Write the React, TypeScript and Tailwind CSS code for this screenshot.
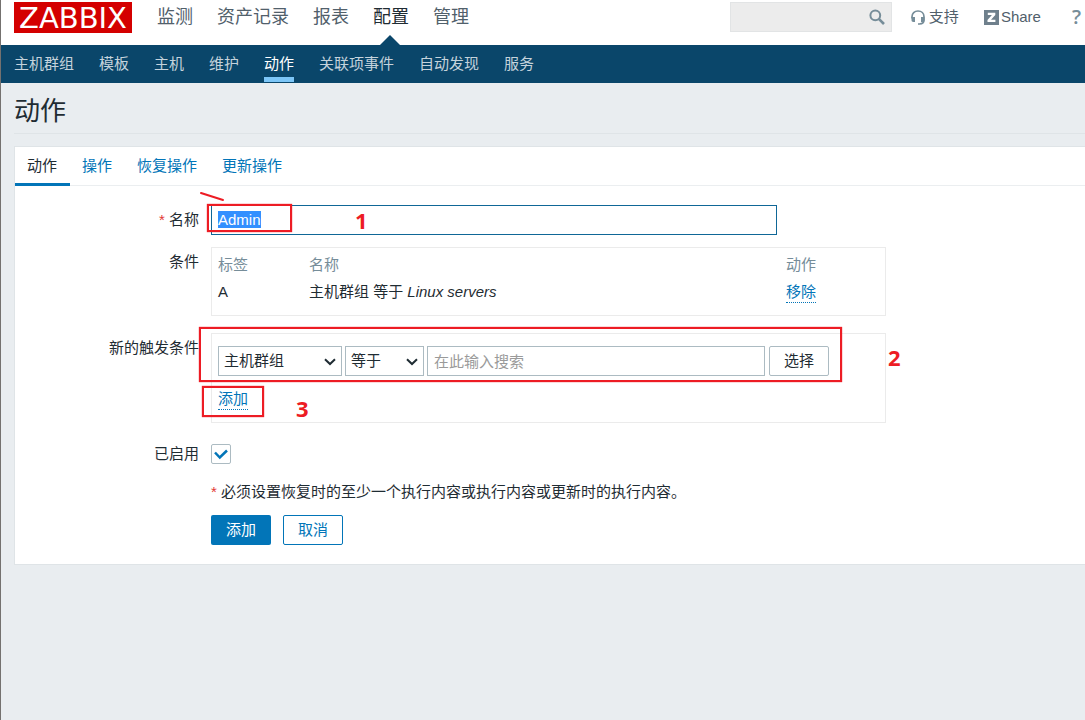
import React from "react";

const mainMenu = ["监测", "资产记录", "报表", "配置", "管理"];
const subMenu = ["主机群组", "模板", "主机", "维护", "动作", "关联项事件", "自动发现", "服务"];
const tabs = ["动作", "操作", "恢复操作", "更新操作"];

const boxClass = "border border-[#ebebeb] w-[675px] px-[6px]";
const fieldClass = "h-[30px] border border-[#acbbc2] bg-white focus:outline-none";
const linkClass = "text-[#0275b8] border-b border-dotted border-[#0275b8] leading-[20px] inline-block";
const markClass = "absolute border-2 border-[#ed1c24] shadow-[0_0_1px_#ed1c24] pointer-events-none";
const markNumberClass = "absolute font-['Open_Sans',sans-serif] text-[22px] leading-[24px] font-bold text-[#ed1c24] pointer-events-none";

const SearchIcon: React.FC = () => (
  <svg width="16" height="16" viewBox="0 0 16 16" fill="none" stroke="#768d99">
    <circle cx="6.3" cy="6.3" r="4.9" strokeWidth="2" />
    <path d="M9.8 9.8L15 15" strokeWidth="2.6" />
  </svg>
);

const SupportIcon: React.FC = () => (
  <svg width="14" height="15" viewBox="0 0 14 15" fill="none">
    <path d="M1 8.500V6.800C1 3.200 3.500 1 7 1s6 2.200 6 5.800V10c0 2.600-1.500 3.800-4.500 4H7" stroke="#768d99" strokeWidth="1.700" />
    <path d="M.5 7H4v5H2.500C1 12 .5 11 .5 10zM10 7h3.500v3c0 1-.5 2-2 2H10z" fill="#768d99" />
  </svg>
);

const ShareIcon: React.FC = () => (
  <svg width="15" height="15" viewBox="0 0 15 15">
    <rect width="15" height="15" fill="#6f808c" />
    <path d="M3.800 2.800h7.500v2.100L7 9.800h4.400v2.300H3.500V10l4.400-4.900H3.800z" fill="#fff" />
  </svg>
);

const Chevron: React.FC = () => (
  <svg
    width="12"
    height="8"
    viewBox="0 0 12 8"
    fill="none"
    className="absolute right-[6px] top-[12px] pointer-events-none"
  >
    <path d="M1 1.200L6 6l5-4.800" stroke="#1f2c33" strokeWidth="2" />
  </svg>
);

type RowProps = {
  label?: React.ReactNode;
  htmlFor?: string;
  className?: string;
  children: React.ReactNode;
};

const Row: React.FC<RowProps> = ({ label, htmlFor, className, children }) => (
  <div className={`flex gap-3 ${className || ""}`}>
    <label htmlFor={htmlFor} className="w-[184px] shrink-0 text-right leading-[30px]">
      {label}
    </label>
    <div>{children}</div>
  </div>
);

const App: React.FC = () => {
  const nameRef = React.useRef<HTMLInputElement>(null);

  React.useEffect(() => {
    nameRef.current?.focus();
    nameRef.current?.select();
  }, []);

  return (
    <div className="min-h-screen overflow-x-hidden border-l border-[#74716f] bg-[#e9edf0] font-['Liberation_Sans','Noto_Sans_CJK_SC',sans-serif] text-[15px] text-[#1f2c33]">
      {/* Header */}
      <header className="flex h-[45px] bg-white pl-[13px] pr-1 pt-[2px]">
        <a
          href="#"
          className="h-[31px] w-[118px] bg-[#d40000] text-center font-['DejaVu_Sans',sans-serif] text-[29px] leading-[32px] text-white"
        >
          ZABBIX
        </a>
        <nav className="ml-[25px] flex gap-6 text-[18px] leading-[30px] text-[#51606b]">
          {mainMenu.map((item) => (
            <a key={item} href="#" className={item === "配置" ? "relative text-[#1f2c33]" : ""}>
              {item}
              {item === "配置" && (
                <svg width="20" height="10" viewBox="0 0 20 10" className="absolute left-[7px] top-[33px]">
                  <path d="M0 10L10 0l10 10z" fill="#0a466a" />
                </svg>
              )}
            </a>
          ))}
        </nav>
        <div className="ml-auto flex leading-[30px] text-[#51606b]">
          <div className="relative h-[30px]">
            <input
              type="text"
              aria-label="搜索"
              className="h-[30px] w-[162px] border border-[#e2e4e5] bg-[#ececec] px-2 focus:outline-none"
            />
            <button aria-label="搜索" className="absolute right-[7px] top-[7px]">
              <SearchIcon />
            </button>
          </div>
          <a href="#" className="ml-[19px] flex h-[30px] items-center gap-1">
            <SupportIcon />
            支持
          </a>
          <a href="#" className="ml-[25px] flex h-[30px] items-center gap-[2px]">
            <ShareIcon />
            Share
          </a>
          <a href="#" className="ml-[31px] font-['Open_Sans',sans-serif] text-[20px] font-semibold text-[#768d99]">
            ?
          </a>
        </div>
      </header>

      <nav className="flex h-[38px] gap-[25px] bg-[#0a466a] pl-[13px] leading-[38px] text-[#c5d3dc]">
        {subMenu.map((item) => (
          <a
            key={item}
            href="#"
            className={`h-[37px] whitespace-nowrap ${item === "动作" ? "border-b-5 border-[#7dc6f7] text-white" : ""}`}
          >
            {item}
          </a>
        ))}
      </nav>

      <main className="pl-[13px]">
        <h1 className="mb-3 border-b border-[#dfe4e7] pb-[2px] pt-2 text-[26px] leading-[40px]">动作</h1>

        <div className="relative border-y border-l border-[#dfe4e7] bg-white pb-[19px]">
          {/* Tabs */}
          <div role="tablist" className="flex h-[39px] border-b border-[#ebeef0]">
            {tabs.map((tab, i) => (
              <button
                key={tab}
                role="tab"
                aria-selected={i === 0}
                className={`h-[39px] border-b-3 pl-3 pr-[13px] pt-[2px] leading-[34px] ${
                  i === 0 ? "border-[#0275b8]" : "border-transparent text-[#0275b8]"
                }`}
              >
                {tab}
              </button>
            ))}
          </div>

          {/* Form */}
          <Row
            htmlFor="name"
            className="mt-[19px]"
            label={
              <>
                <span className="text-[#e33734]">*</span> 名称
              </>
            }
          >
            <input
              id="name"
              ref={nameRef}
              type="text"
              defaultValue="Admin"
              className="block h-[30px] w-[566px] border border-[#0f6797] bg-white px-[6px] pb-[2px] font-['Liberation_Sans',sans-serif] selection:bg-[#3390ff] selection:text-white focus:outline-none"
            />
          </Row>

          <Row label="条件" className="mt-3">
            <div className={`${boxClass} pb-[10px] pt-[3px]`}>
              <table className="w-full table-fixed text-left leading-[27px]">
                <thead>
                  <tr className="text-[#768d99]">
                    <th className="w-[91px] p-0 font-normal">标签</th>
                    <th className="w-[477px] p-0 font-normal">名称</th>
                    <th className="p-0 font-normal">动作</th>
                  </tr>
                </thead>
                <tbody>
                  <tr>
                    <td className="p-0">A</td>
                    <td className="p-0">
                      主机群组 等于 <em>Linux servers</em>
                    </td>
                    <td className="p-0">
                      <button className={linkClass}>移除</button>
                    </td>
                  </tr>
                </tbody>
              </table>
            </div>
          </Row>

          <Row label="新的触发条件" className="mt-[17px]">
            <div className={`${boxClass} h-[90px] pt-3`}>
              <div className="flex gap-[3px]">
                <div className="relative">
                  <select aria-label="条件类型" className={`${fieldClass} w-[124px] appearance-none pl-[5px]`}>
                    <option>主机群组</option>
                  </select>
                  <Chevron />
                </div>
                <div className="relative">
                  <select aria-label="运算符" className={`${fieldClass} w-[79px] appearance-none pl-[5px]`}>
                    <option>等于</option>
                  </select>
                  <Chevron />
                </div>
                <input
                  type="text"
                  aria-label="主机群组"
                  placeholder="在此输入搜索"
                  className={`${fieldClass} w-[338px] px-[6px] placeholder:text-[#9a9a9a]`}
                />
                <button className={`${fieldClass} ml-px w-[60px] rounded-[2px]`}>选择</button>
              </div>
              <button className={`${linkClass} mt-[13px]`}>添加</button>
            </div>
          </Row>

          <Row label="已启用" htmlFor="enabled" className="mt-4">
            <div className="relative mt-[5px] h-5 w-5">
              <input
                id="enabled"
                type="checkbox"
                defaultChecked
                className="peer block h-5 w-5 appearance-none rounded-[2px] border border-[#acbbc2] bg-white"
              />
              <svg
                width="14"
                height="11"
                viewBox="0 0 14 11"
                fill="none"
                className="pointer-events-none absolute left-[3px] top-[5px] hidden peer-checked:block"
              >
                <path d="M1 3.500L5.800 8.500 13 1.500" stroke="#0275b8" strokeWidth="2.500" />
              </svg>
            </div>
          </Row>

          <Row className="mt-2">
            <p className="leading-[30px]">
              <span className="text-[#e33734]">*</span> 必须设置恢复时的至少一个执行内容或执行内容或更新时的执行内容。
            </p>
            <div className="mt-2 flex gap-3">
              <button className="h-[30px] w-[60px] rounded-[2px] bg-[#0275b8] text-white">添加</button>
              <button className="h-[30px] w-[60px] rounded-[2px] border border-[#0275b8] text-[#0275b8]">取消</button>
            </div>
          </Row>

          {/* Step marks */}
          <svg width="28" height="12" viewBox="0 0 28 12" className="pointer-events-none absolute left-[184px] top-[44px]">
            <path d="M2 2l22 7" stroke="#ed1c24" strokeWidth="2" strokeLinecap="round" />
          </svg>
          <div className={`${markClass} left-[192px] top-[57px] h-[28px] w-[85px]`} />
          <div className={`${markClass} left-[184px] top-[180px] h-[55px] w-[643px]`} />
          <div className={`${markClass} left-[187px] top-[239px] h-[31px] w-[62px]`} />
          <span className={`${markNumberClass} left-[340px] top-[61px]`}>1</span>
          <span className={`${markNumberClass} left-[873px] top-[198px]`}>2</span>
          <span className={`${markNumberClass} left-[281px] top-[249px]`}>3</span>
        </div>
      </main>
    </div>
  );
};

export default App;
